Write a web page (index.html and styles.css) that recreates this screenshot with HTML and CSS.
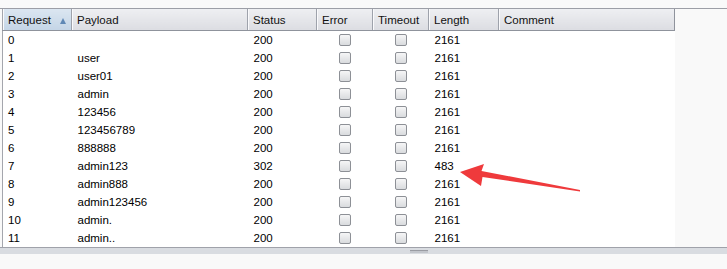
FILE: index.html
```html
<!DOCTYPE html>
<html lang="en">
<head>
    <meta charset="UTF-8">
    <title>Intruder results</title>
    <link rel="stylesheet" href="styles.css">
</head>
<body>
    <div class="results">
        <table class="grid">
            <colgroup>
                <col class="c-req"><col class="c-payload"><col class="c-status"><col class="c-error">
                <col class="c-timeout"><col class="c-length"><col class="c-comment">
            </colgroup>
            <thead>
                <tr>
                    <th class="sorted">Request <span class="sort-arrow"></span></th>
                    <th>Payload</th>
                    <th>Status</th>
                    <th>Error</th>
                    <th>Timeout</th>
                    <th>Length</th>
                    <th class="last">Comment</th>
                </tr>
            </thead>
            <tbody>
                <tr><td>0</td><td></td><td>200</td><td class="chk"><span class="box"></span></td><td class="chk"><span class="box"></span></td><td>2161</td><td></td></tr>
                <tr><td>1</td><td>user</td><td>200</td><td class="chk"><span class="box"></span></td><td class="chk"><span class="box"></span></td><td>2161</td><td></td></tr>
                <tr><td>2</td><td>user01</td><td>200</td><td class="chk"><span class="box"></span></td><td class="chk"><span class="box"></span></td><td>2161</td><td></td></tr>
                <tr><td>3</td><td>admin</td><td>200</td><td class="chk"><span class="box"></span></td><td class="chk"><span class="box"></span></td><td>2161</td><td></td></tr>
                <tr><td>4</td><td>123456</td><td>200</td><td class="chk"><span class="box"></span></td><td class="chk"><span class="box"></span></td><td>2161</td><td></td></tr>
                <tr><td>5</td><td>123456789</td><td>200</td><td class="chk"><span class="box"></span></td><td class="chk"><span class="box"></span></td><td>2161</td><td></td></tr>
                <tr><td>6</td><td>888888</td><td>200</td><td class="chk"><span class="box"></span></td><td class="chk"><span class="box"></span></td><td>2161</td><td></td></tr>
                <tr><td>7</td><td>admin123</td><td>302</td><td class="chk"><span class="box"></span></td><td class="chk"><span class="box"></span></td><td>483</td><td></td></tr>
                <tr><td>8</td><td>admin888</td><td>200</td><td class="chk"><span class="box"></span></td><td class="chk"><span class="box"></span></td><td>2161</td><td></td></tr>
                <tr><td>9</td><td>admin123456</td><td>200</td><td class="chk"><span class="box"></span></td><td class="chk"><span class="box"></span></td><td>2161</td><td></td></tr>
                <tr><td>10</td><td>admin.</td><td>200</td><td class="chk"><span class="box"></span></td><td class="chk"><span class="box"></span></td><td>2161</td><td></td></tr>
                <tr><td>11</td><td>admin..</td><td>200</td><td class="chk"><span class="box"></span></td><td class="chk"><span class="box"></span></td><td>2161</td><td></td></tr>
            </tbody>
        </table>
        <!-- red arrow pointing at the 483 length -->
        <svg class="mark" width="727" height="269" viewBox="0 0 727 269">
            <polygon points="460,172 484,164 481.5,171 580,190 580,191.5 482.5,177 481,186" fill="#ef3a3c"/>
        </svg>
    </div>
    <div class="splitter"><span class="grip"></span></div>
</body>
</html>
```

FILE: styles.css
```css
body {
    margin: 0;
    padding: 8px 0 0 0;
    background-color: #f9f9f9;
    font-family: "Liberation Sans", Arial, sans-serif;
    font-size: 11.5px;
    color: #000;
}
.results {
    border-top: 1px solid #9c9ea6;
    padding-left: 2px;
    height: 238px;
}
.grid {
    border-collapse: collapse;
    table-layout: fixed;
    width: 673px;
    border-left: 1px solid #a4a6ad;
    background-color: #fff;
}
.c-req { width: 69px; }
.c-payload { width: 176px; }
.c-status { width: 69px; }
.c-error { width: 56px; }
.c-timeout { width: 56px; }
.c-length { width: 70px; }
.c-comment { width: 176px; }

.grid th {
    height: 21px;
    padding: 0 0 0 5px;
    text-align: left;
    font-weight: normal;
    color: #111;
    background: linear-gradient(#eeeff2, #dcdde2);
    border-right: 1px solid #9ea2ab;
    border-bottom: 1px solid #8f939c;
    box-shadow: inset 1px 0 0 #fafafc;
}
.grid th.sorted {
    background: linear-gradient(#dbe6f1, #c4d5e6);
}
.grid th.last {
    border-right: 1px solid #8f939c;
}
/* small up triangle for the sorted column */
.sort-arrow {
    float: right;
    width: 0;
    height: 0;
    margin: 4px 5px 0 0;
    border-left: 3.5px solid transparent;
    border-right: 3.5px solid transparent;
    border-bottom: 6px solid #5f88b5;
}
.grid td {
    height: 18px;
    padding: 0 0 0 6px;
    line-height: 18px;
    white-space: nowrap;
}
.grid td:first-child {
    padding-left: 5px;
}
.grid td.chk {
    padding: 0;
    text-align: center;
}
.box {
    display: inline-block;
    width: 10px;
    height: 10px;
    margin-top: 3px;
    vertical-align: top;
    border: 1px solid #8d9096;
    border-radius: 2px;
    background: linear-gradient(#f6f6f7, #d9dbde);
}
.mark {
    position: absolute;
    left: 0;
    top: 0;
    pointer-events: none;
}
.splitter {
    border-top: 1px solid #a0a2aa;
    height: 6px;
    background-color: #d9dce1;
    display: flex;
}
.grip {
    width: 18px;
    height: 2px;
    margin-top: 2px;
    margin-left: 410px;
    border-top: 1px solid #9a9ca3;
    background-color: #c3c6cc;
}
```
